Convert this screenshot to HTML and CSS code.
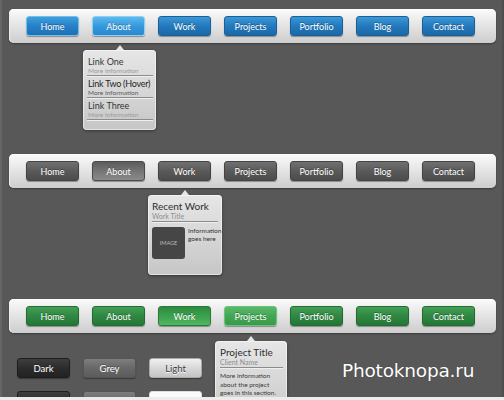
FILE: index.html
```html
<!DOCTYPE html>
<html lang="en">

<head>
	<meta charset="UTF-8">
	<meta name="viewport" content="width=device-width, initial-scale=1.0">
	<title>Navigation Menus</title>
	<link rel="stylesheet" href="styles.css">
</head>

<body>
	<div class="frame">
		<!-- blue set, simple link dropdown -->
		<section class="navset blue">
			<nav class="bar">
				<ul class="menu">
					<li><a class="btn current" href="#">Home</a></li>
					<li class="open">
						<a class="btn hover" href="#">About</a>
						<div class="drop drop-links">
							<ul>
								<li class="item">
									<span class="title">Link One</span>
									<span class="sub">More Information</span>
								</li>
								<li class="item active">
									<span class="title">Link Two (Hover)</span>
									<span class="sub">More Information</span>
								</li>
								<li class="item">
									<span class="title">Link Three</span>
									<span class="sub">More Information</span>
								</li>
							</ul>
						</div>
					</li>
					<li><a class="btn" href="#">Work</a></li>
					<li><a class="btn" href="#">Projects</a></li>
					<li><a class="btn" href="#">Portfolio</a></li>
					<li><a class="btn" href="#">Blog</a></li>
					<li><a class="btn" href="#">Contact</a></li>
				</ul>
			</nav>
		</section>

		<!-- grey set, work preview -->
		<section class="navset grey">
			<nav class="bar">
				<ul class="menu">
					<li><a class="btn" href="#">Home</a></li>
					<li><a class="btn hover" href="#">About</a></li>
					<li class="open">
						<a class="btn" href="#">Work</a>
						<div class="drop drop-work">
							<div class="head">
								<span class="title">Recent Work</span>
								<span class="sub">Work Title</span>
							</div>
							<div class="preview">
								<div class="thumb">IMAGE</div>
								<p>Information goes here</p>
							</div>
						</div>
					</li>
					<li><a class="btn" href="#">Projects</a></li>
					<li><a class="btn" href="#">Portfolio</a></li>
					<li><a class="btn" href="#">Blog</a></li>
					<li><a class="btn" href="#">Contact</a></li>
				</ul>
			</nav>
		</section>

		<!-- green set, project details -->
		<section class="navset green last">
			<nav class="bar">
				<ul class="menu">
					<li><a class="btn" href="#">Home</a></li>
					<li><a class="btn" href="#">About</a></li>
					<li><a class="btn current" href="#">Work</a></li>
					<li class="open">
						<a class="btn hover" href="#">Projects</a>
						<div class="drop drop-project">
							<div class="head">
								<span class="title">Project Title</span>
								<span class="sub">Client Name</span>
							</div>
							<p>More information about the project goes in this section.</p>
						</div>
					</li>
					<li><a class="btn" href="#">Portfolio</a></li>
					<li><a class="btn" href="#">Blog</a></li>
					<li><a class="btn" href="#">Contact</a></li>
				</ul>
			</nav>
		</section>

		<div class="footer">
			<div class="swatches">
				<a class="btn dark" href="#">Dark</a>
				<a class="btn mid" href="#">Grey</a>
				<a class="btn light" href="#">Light</a>
				<a class="btn dark" href="#"></a>
				<a class="btn mid" href="#"></a>
				<a class="btn white" href="#"></a>
			</div>
			<div class="mark">Photoknopa.ru</div>
		</div>
	</div>
</body>

</html>
```

FILE: styles.css
```css
* {
	box-sizing: border-box;
}

body {
	margin: 0;
	background: #ececec;
	font-family: Lato, "Open Sans", sans-serif;
}

ul {
	list-style: none;
	margin: 0;
	padding: 0;
}

p {
	margin: 0;
}

.frame {
	width: 504px;
	height: 397px;
	overflow: hidden;
	padding: 9px 0 0 7px;
	background: #585858;
	border-left: 2px solid #666;
	border-right: 2px solid #4e4e4e;
}

.navset {
	height: 145px;
}

.navset.last {
	height: auto;
	margin-bottom: 25px;
}

.bar {
	width: 487px;
	height: 34px;
	border-radius: 5px;
	background: linear-gradient(#fbfbfb, #e6e6e6 45%, #cdcdcd);
	box-shadow: inset 0 1px 0 #fff, inset 1px 0 0 #eee, 0 1px 2px rgba(0, 0, 0, 0.35);
	padding: 7px 0 0 17px;
}

.menu {
	display: flex;
	gap: 13px;
}

.menu > li {
	position: relative;
}

.btn {
	display: block;
	width: 53px;
	height: 20px;
	line-height: 19px;
	border-radius: 3px;
	text-align: center;
	font-size: 9px;
	color: #fff;
	text-decoration: none;
	text-shadow: 0 -1px 0 rgba(0, 0, 0, 0.3);
	box-shadow: 0 1px 1px rgba(0, 0, 0, 0.35);
}

/* colour sets */

.blue .btn {
	background: linear-gradient(#3c98d6, #2379bd 50%, #1b69a8);
	border: 1px solid #1c5f96;
}

.blue .btn.current {
	background: linear-gradient(#3fa0de, #2680c6 50%, #1f70b3);
	border-color: #72bfea;
}

.blue .btn.hover {
	background: linear-gradient(#5dbaf0, #3699dc 50%, #2a88cf);
	border-color: #8fd0f2;
}

.grey .btn {
	background: linear-gradient(#707070, #5a5a5a 50%, #4c4c4c);
	border: 1px solid #444;
}

.grey .btn.hover {
	background: linear-gradient(#5c5c5c, #7a7a7a 60%, #8a8a8a);
	border-color: #4a4a4a;
}

.green .btn {
	background: linear-gradient(#43a055, #2f8742 50%, #267637);
	border: 1px solid #236b32;
}

.green .btn.current {
	background: linear-gradient(#2c8b3e, #3fa451 60%, #52b763);
	border-color: #2a7a38;
}

.green .btn.hover {
	background: linear-gradient(#5ab96a, #44a655 50%, #3a9a4b);
	border-color: #6cc27a;
}

/* dropdown panels */

.drop {
	position: absolute;
	top: 34px;
	left: -9px;
	width: 73px;
	height: 80px;
	border-radius: 4px;
	background: linear-gradient(#e6e6e6, #d4d4d4 60%, #c6c6c6);
	box-shadow: inset 0 0 0 1px rgba(255, 255, 255, 0.5), 0 1px 3px rgba(0, 0, 0, 0.4);
	color: #353535;
	z-index: 2;
}

.drop::before {
	content: "";
	position: absolute;
	top: -5px;
	left: 50%;
	margin-left: -4px;
	border-left: 4px solid transparent;
	border-right: 4px solid transparent;
	border-bottom: 5px solid #e6e6e6;
}

.title {
	display: block;
	font-size: 9px;
	line-height: 10px;
	white-space: nowrap;
}

.sub {
	display: block;
	font-size: 6.5px;
	line-height: 8px;
	color: #9a9a9a;
	white-space: nowrap;
}

.drop-links {
	padding: 4px 3px 0 4px;
}

.item {
	padding: 3px 1px 0;
	border-bottom: 1px solid #8c8c8c;
	box-shadow: 0 1px 0 #efefef;
}

.item.active .title {
	color: #1e1e1e;
	letter-spacing: -0.25px;
}

.item.active .sub {
	color: #5a5a5a;
}

.drop-work {
	left: -10px;
	width: 74px;
	padding: 6px 4px 0 4px;
}

.head {
	padding-bottom: 1px;
	border-bottom: 1px solid #8c8c8c;
	box-shadow: 0 1px 0 #efefef;
}

.head .title {
	font-size: 10px;
	line-height: 11px;
	color: #2e2e2e;
}

.head .sub {
	font-size: 7px;
	color: #8e8e8e;
}

.preview {
	display: flex;
	gap: 3px;
	margin-top: 5px;
}

.thumb {
	flex: none;
	width: 33px;
	height: 32px;
	border-radius: 3px;
	background: #464646;
	color: #bbb;
	font-size: 5.5px;
	line-height: 32px;
	text-align: center;
}

.preview p {
	font-size: 6.5px;
	line-height: 8px;
	color: #333;
}

.drop-project {
	top: 35px;
	width: 72px;
	padding: 6px 4px 0 5px;
}

.drop-project p {
	margin-top: 4px;
	font-size: 6.5px;
	line-height: 8.5px;
	color: #3a3a3a;
}

/* swatches under the menus */

.footer {
	display: flex;
	align-items: flex-start;
}

.swatches {
	display: flex;
	flex-wrap: wrap;
	gap: 13px;
	width: 185px;
	margin-left: 8px;
}

.swatches .btn {
	font-size: 9.5px;
}

.btn.dark {
	background: linear-gradient(#3e3e3e, #2c2c2c 50%, #222);
	border: 1px solid #1e1e1e;
}

.btn.mid {
	background: linear-gradient(#7e7e7e, #686868 50%, #5c5c5c);
	border: 1px solid #555;
}

.btn.light {
	background: linear-gradient(#f0f0f0, #d8d8d8 50%, #c4c4c4);
	border: 1px solid #aaa;
	color: #3a3a3a;
	text-shadow: 0 1px 0 #fff;
}

.btn.white {
	background: #fbfbfb;
	border: 1px solid #ddd;
}

.mark {
	margin: 2px 0 0 140px;
	font-family: "DejaVu Sans", sans-serif;
	font-size: 18.5px;
	color: #fff;
	letter-spacing: -0.2px;
	text-shadow: 0 0 1px rgba(0, 0, 0, 0.4);
}
```
